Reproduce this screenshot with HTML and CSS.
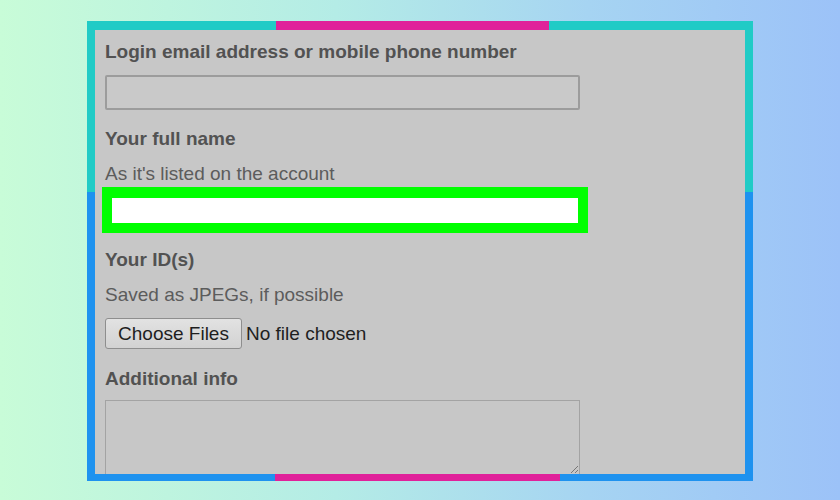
FILE: index.html
```html
<!DOCTYPE html>
<html lang="en">
<head>
<meta charset="utf-8">
<title>Form</title>
<link rel="stylesheet" href="styles.css">
</head>
<body>
<div class="frame">
  <div class="panel">
    <div class="label l-login">Login email address or mobile phone number</div>
    <div class="field"></div>

    <div class="label l-name">Your full name</div>
    <div class="sub s-name">As it's listed on the account</div>
    <div class="highlight"><div class="white"></div></div>

    <div class="label l-id">Your ID(s)</div>
    <div class="sub s-id">Saved as JPEGs, if possible</div>
    <div class="filerow">
      <span class="btn">Choose Files</span>
      <span class="nofile">No file chosen</span>
    </div>

    <div class="label l-info">Additional info</div>
    <div class="textarea">
      <svg class="grip" width="10" height="10" viewBox="0 0 10 10"><path d="M9 2 L2 9 M9 6 L6 9" stroke="#777" stroke-width="1" fill="none"/></svg>
    </div>
  </div>
</div>
</body>
</html>
```
FILE: styles.css
```css
html, body {
  margin: 0;
  padding: 0;
}
body {
  width: 840px;
  height: 500px;
  overflow: hidden;
  background: linear-gradient(90deg, #c8fcd8 0%, #b4ece6 40%, #a6d4f2 70%, #9cc2f8 100%);
  font-family: "Liberation Sans", Arial, sans-serif;
}
.frame {
  box-sizing: border-box;
  margin: 21px 0 0 87px;
  width: 666px;
  height: 460px;
  padding: 9px 8px 7px 8px;
  background:
    linear-gradient(90deg, #20cbc6 0 189px, #e0219a 189px 462px, #20cbc6 462px) top left / 100% 9px no-repeat,
    linear-gradient(90deg, #1e92ef 0 188px, #e0219a 188px 473px, #1e92ef 473px) bottom left / 100% 7px no-repeat,
    linear-gradient(180deg, #20cbc6 0 171px, #1e92ef 171px) top left / 100% 100% no-repeat;
}
.panel {
  height: 100%;
  box-sizing: border-box;
  background: #c7c7c7;
  overflow: hidden;
  padding: 11px 10px 0 10px;
}
.label {
  font-size: 19px;
  line-height: 22px;
  font-weight: bold;
  color: #525252;
}
.sub {
  font-size: 19px;
  line-height: 22px;
  color: #5c5c5c;
}
.field {
  margin-top: 12px;
  width: 475px;
  height: 35px;
  box-sizing: border-box;
  border: 2px solid #9c9c9c;
  border-radius: 2px;
  background: #c9c9c9;
}
.l-name { margin-top: 18px; }
.s-name { margin-top: 13px; }
.highlight {
  margin-top: 2px;
  margin-left: -3px;
  width: 486px;
  height: 46px;
  box-sizing: border-box;
  background: #00ff00;
  padding: 11px 10px 10px 10px;
}
.white {
  height: 100%;
  background: #ffffff;
}
.l-id { margin-top: 16px; }
.s-id { margin-top: 13px; }
.filerow {
  margin-top: 12px;
  display: flex;
  align-items: center;
  gap: 4px;
}
.btn {
  box-sizing: border-box;
  width: 137px;
  height: 31px;
  display: flex;
  align-items: center;
  justify-content: center;
  font-size: 19px;
  color: #1e1e1e;
  background: linear-gradient(180deg, #e2e2e2, #d2d2d2);
  border: 1px solid #8e8e8e;
  border-radius: 3px;
}
.nofile {
  font-size: 19px;
  color: #1e1e1e;
}
.l-info { margin-top: 19px; }
.textarea {
  position: relative;
  margin-top: 10px;
  width: 475px;
  height: 75px;
  box-sizing: border-box;
  border: 1px solid #a3a3a3;
  background: #c7c7c7;
}
.grip {
  position: absolute;
  right: 0;
  bottom: 0;
}
```
